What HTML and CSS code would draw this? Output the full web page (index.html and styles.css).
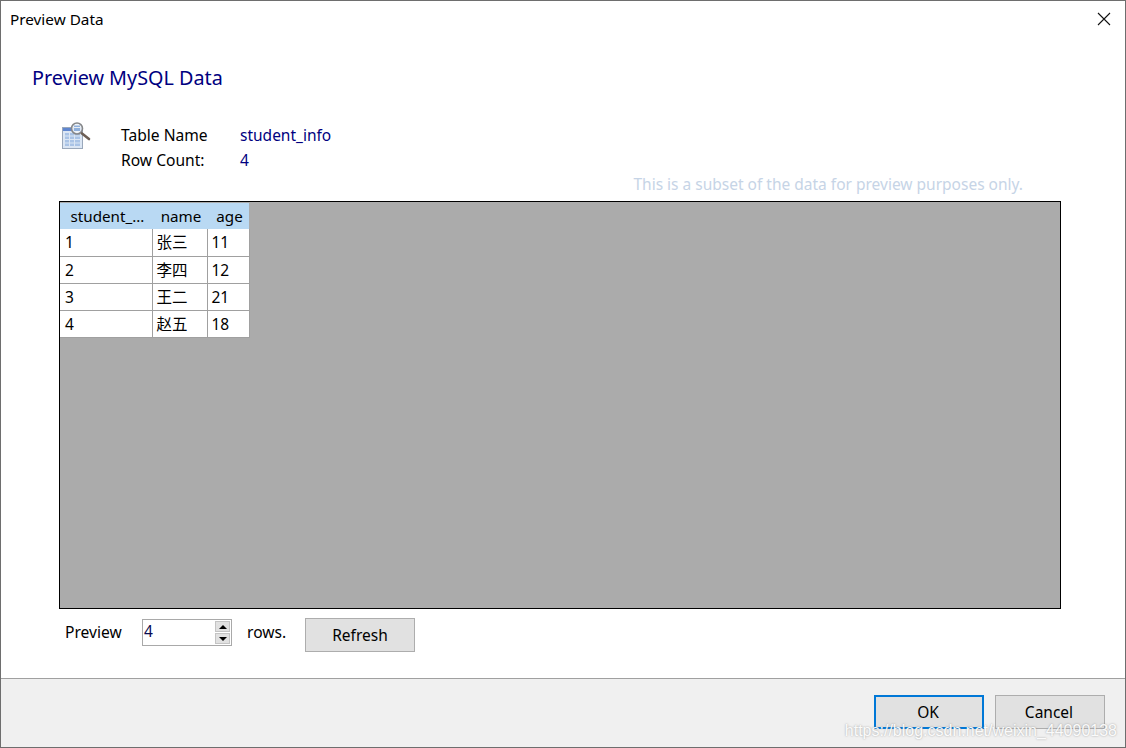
FILE: index.html
```html
<!DOCTYPE html>
<html lang="en">
<head>
<meta charset="utf-8">
<title>Preview Data</title>
<link rel="stylesheet" href="styles.css">
</head>
<body>
<div class="dialog">
  <header class="titlebar">
    <span class="title">Preview Data</span>
    <svg class="close" width="14" height="14" viewBox="0 0 14 14"><path d="M1 1L13 13M13 1L1 13" stroke="#111" stroke-width="1.1" fill="none"/></svg>
  </header>
  <main class="content">
    <h1 class="heading">Preview MySQL Data</h1>
    <section class="info">
      <svg class="info-icon" width="30" height="28" viewBox="0 0 30 28">
        <rect x="0.5" y="5.5" width="20" height="21" fill="#dbe6f4" stroke="#9aa8bb"/>
        <rect x="1" y="6" width="19" height="3" fill="#5f86cf"/>
        <path d="M3 11h4v2.500H3zM8 11h4v2.500H8zM13 11h5v2.500h-5zM3 14.500h4v2.500H3zM8 14.500h4v2.500H8zM13 14.500h5v2.500h-5zM3 18h4v2.500H3zM8 18h4v2.500H8zM13 18h5v2.500h-5zM3 21.500h4v2.500H3zM8 21.500h4v2.500H8zM13 21.500h5v2.500h-5z" fill="#a9c3e6"/>
        <circle cx="15" cy="6.500" r="5.500" fill="#eef3f8" fill-opacity="0.9" stroke="#85878a" stroke-width="1.6"/>
        <path d="M12 3.500h6v1.500h-6zM12 6h6v3h-6z" fill="#8fb0dc"/>
        <path d="M20 11.500L27 17" stroke="#6d5f55" stroke-width="2.600" stroke-linecap="round"/>
      </svg>
      <div class="info-grid">
        <span class="label">Table Name</span><span class="value">student_info</span>
        <span class="label">Row Count:</span><span class="value">4</span>
      </div>
    </section>
    <p class="note">This is a subset of the data for preview purposes only.</p>
    <div class="grid-area">
      <table class="data">
        <thead>
          <tr><th class="c1">student_...</th><th class="c2">name</th><th class="c3">age</th></tr>
        </thead>
        <tbody>
          <tr><td>1</td><td>张三</td><td>11</td></tr>
          <tr><td>2</td><td>李四</td><td>12</td></tr>
          <tr><td>3</td><td>王二</td><td>21</td></tr>
          <tr><td>4</td><td>赵五</td><td>18</td></tr>
        </tbody>
      </table>
    </div>
    <div class="controls">
      <span class="ctl-label">Preview</span>
      <div class="spinner">
        <span class="spin-value">4</span>
        <span class="spin-btns">
          <span class="spin-btn"><span class="arrow-up"></span></span>
          <span class="spin-btn"><span class="arrow-down"></span></span>
        </span>
      </div>
      <span class="ctl-rows">rows.</span>
      <button class="btn refresh" type="button">Refresh</button>
    </div>
  </main>
  <footer class="footer">
    <button class="btn primary" type="button">OK</button>
    <button class="btn cancel" type="button">Cancel</button>
  </footer>
  <div class="watermark">https://blog.csdn.net/weixin_44090138</div>
</div>
</body>
</html>
```
FILE: styles.css
```css
* { box-sizing: border-box; }
html, body { margin: 0; padding: 0; }
body {
  width: 1126px;
  height: 748px;
  overflow: hidden;
  background: #fff;
  font-family: "Noto Sans", "Noto Sans CJK SC", sans-serif;
  font-size: 15.5px;
  color: #000;
}
.dialog {
  position: relative;
  width: 1126px;
  height: 748px;
  display: flex;
  flex-direction: column;
  border: 1px solid #6e6e6e;
  background: #fff;
}
.titlebar {
  height: 36px;
  flex: none;
  display: flex;
  align-items: center;
  justify-content: space-between;
  padding: 0 14px 0 9px;
}
.title { font-size: 15.3px; }
.close { display: block; }
.content {
  flex: 1;
  padding: 0 64px 0 58px;
  display: flex;
  flex-direction: column;
}
.heading {
  margin: 24px 0 0 -27px;
  font-size: 19.8px;
  font-weight: 400;
  line-height: 34px;
  color: #000080;
}
.info {
  display: flex;
  margin-top: 27px;
  height: 49px;
}
.info-icon { margin: 0 0 0 3px; flex: none; }
.info-grid {
  margin-left: 29px;
  display: grid;
  grid-template-columns: 119px auto;
  grid-auto-rows: 25px;
  align-items: center;
}
.label { font-size: 15.6px; }
.value { font-size: 15.5px; color: #000080; }
.note {
  margin: 0;
  height: 30px;
  padding: 3px 38px 0 0;
  line-height: 20px;
  text-align: right;
  font-size: 15.5px;
  color: #c6d4e6;
}
.grid-area {
  height: 408px;
  flex: none;
  background: #ababab;
  border: 1px solid #000;
  padding: 1px 0 0 0;
}
.data {
  border-collapse: collapse;
  table-layout: fixed;
  width: 189px;
  font-size: 15.5px;
}
.data th {
  height: 26px;
  padding: 0 0 0 3px;
  font-size: 15.2px;
  font-weight: 400;
  background: #b9d9f3;
  text-align: center;
  line-height: 26px;
}
.c1 { width: 92px; }
.c2 { width: 55px; }
.c3 { width: 42px; }
.data td {
  height: 27px;
  padding: 1px 0 0 4px;
  background: #fff;
  border: 1px solid #a0a0a0;
  border-left: 0;
  line-height: 25px;
}
.data td:first-child { padding-left: 5px; }
.data td + td { border-left: 1px solid #a0a0a0; }
.data tr:first-child td { border-top: 0; }
.controls {
  display: flex;
  margin-top: 9px;
  height: 34px;
  align-items: flex-start;
}
.ctl-label { margin: 4px 0 0 6px; width: 77px; flex: none; font-size: 15.6px; line-height: 21px; }
.spinner {
  width: 90px;
  height: 27px;
  margin-top: 1px;
  border: 1px solid #a9a9a9;
  display: flex;
  justify-content: space-between;
  padding: 1px;
  flex: none;
}
.spin-value { line-height: 21px; font-size: 15.5px; color: #0a0a50; }
.spin-btns { display: flex; flex-direction: column; width: 15px; gap: 1px; }
.spin-btn {
  flex: 1;
  background: #e1e1e1;
  border: 1px solid #c4c4c4;
  display: flex;
  align-items: center;
  justify-content: center;
}
.arrow-up { border: 4px solid transparent; border-top: 0; border-bottom: 4px solid #000; }
.arrow-down { border: 4px solid transparent; border-bottom: 0; border-top: 4px solid #000; }
.ctl-rows { margin: 4px 0 0 15px; width: 58px; flex: none; font-size: 15.6px; line-height: 21px; }
.btn {
  width: 110px;
  height: 34px;
  padding: 0;
  background: #e1e1e1;
  border: 1px solid #adadad;
  font-family: inherit;
  font-size: 15.5px;
  color: #000;
  border-radius: 0;
}
.footer .btn { padding-right: 2px; }
.footer {
  height: 69px;
  flex: none;
  border-top: 1px solid #a0a0a0;
  background: #f0f0f0;
  display: flex;
  justify-content: flex-end;
  gap: 11px;
  padding: 16px 20px 0 0;
}
.primary { border: 2px solid #0078d7; }
.watermark {
  position: absolute;
  right: 8px;
  bottom: 7px;
  font-family: "Liberation Sans", sans-serif;
  font-size: 16px;
  color: rgba(255, 255, 255, 0.95);
  text-shadow: 0 0 2px rgba(130,130,130,0.75);
  white-space: nowrap;
}
```
